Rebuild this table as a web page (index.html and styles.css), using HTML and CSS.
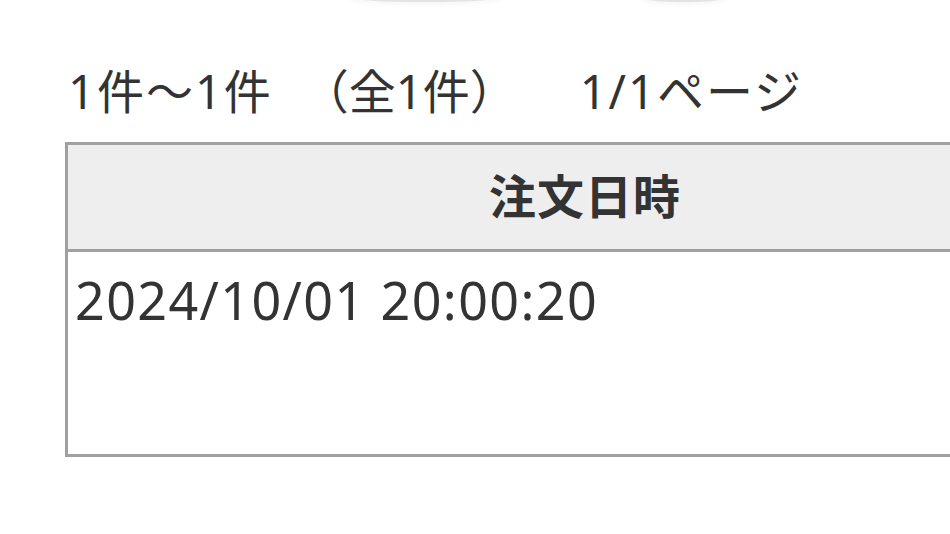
FILE: index.html
```html
<!DOCTYPE html>
<html lang="ja">
<head>
<meta charset="utf-8">
<link rel="stylesheet" href="styles.css">
</head>
<body>
<div class="tabs">
  <div class="tab tab-a"></div>
  <div class="tab tab-b"></div>
</div>
<div class="content">
  <p class="count"><span class="range">1件〜1件</span><span class="total">（全1件）</span><span class="page">1/1ページ</span></p>
  <table class="orders">
    <thead>
      <tr><th>注文日時</th></tr>
    </thead>
    <tbody>
      <tr><td>2024/10/01 20:00:20</td></tr>
    </tbody>
  </table>
</div>
</body>
</html>
```
FILE: styles.css
```css
html, body {
  margin: 0;
  padding: 0;
  overflow: hidden;
  background: #fff;
}
body {
  width: 950px;
  height: 534px;
  font-family: "Noto Sans", "Noto Sans CJK JP", sans-serif;
  color: #333;
}
.tabs {
  position: relative;
  height: 0;
}
.tab {
  position: absolute;
  top: -40px;
  height: 40px;
  border-radius: 0 0 40% 40% / 0 0 6px 6px;
  background: #fff;
  border-bottom: 2px solid #e3e3e3;
  box-shadow: 0 3px 4px rgba(0,0,0,0.03);
}
.tab-a { left: 348px; width: 154px; }
.tab-b { left: 640px; width: 88px; }
.content {
  padding-left: 65px;
}
.count {
  margin: 0;
  padding-top: 60px;
  padding-left: 3px;
  font-size: 47px;
  line-height: 62px;
  white-space: nowrap;
  letter-spacing: 2px;
  display: flex;
}
.total {
  margin-left: 29px;
  letter-spacing: 0;
}
.page {
  margin-left: 63px;
}
.orders {
  margin-top: 20px;
  width: 1040px;
  border-collapse: collapse;
}
.orders th, .orders td {
  border: 3px solid #a0a0a0;
}
.orders th {
  background: #eeeeee;
  height: 96px;
  padding: 0 0 8px;
  font-size: 47px;
  font-weight: bold;
  text-align: center;
  vertical-align: middle;
  letter-spacing: 1px;
}
.orders td {
  height: 205px;
  padding: 15px 0 0 7px;
  font-size: 52px;
  line-height: 66px;
  letter-spacing: 1.4px;
  vertical-align: top;
  text-align: left;
  box-sizing: border-box;
}
```
